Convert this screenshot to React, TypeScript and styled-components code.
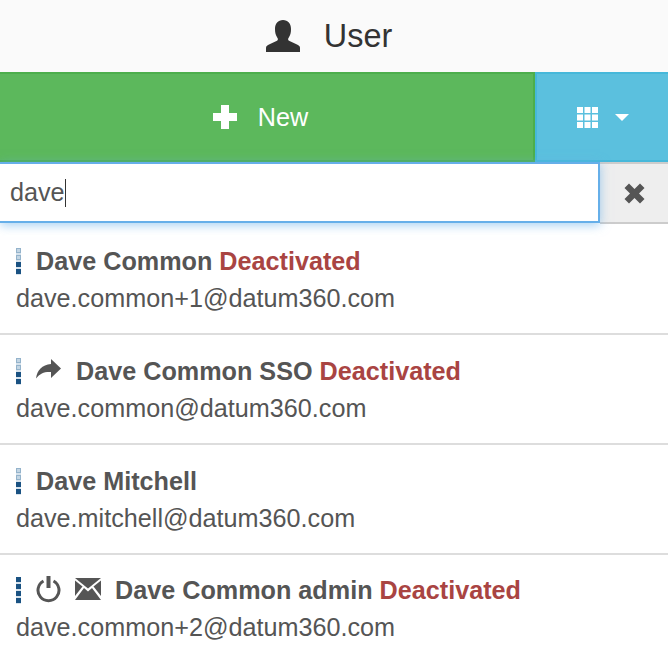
import styled, { createGlobalStyle } from "styled-components";

const Global = createGlobalStyle`
  html, body {
    margin: 0;
    background: #fff;
    font-family: "Liberation Sans", Arial, sans-serif;
    color: #555;
  }
`;

const users = [
  { name: "Dave Common", email: "dave.common+1@datum360.com", level: 2, off: true, icons: [] as string[] },
  { name: "Dave Common SSO", email: "dave.common@datum360.com", level: 2, off: true, icons: ["share"] },
  { name: "Dave Mitchell", email: "dave.mitchell@datum360.com", level: 2, off: false, icons: [] as string[] },
  { name: "Dave Common admin", email: "dave.common+2@datum360.com", level: 4, off: true, icons: ["power", "mail"] },
];

const UserIcon = () => (
  <svg width="34" height="32" viewBox="0 0 34 32">
    <path d="M0 32v-4c0-1.500 1-2.500 3-3.400l8-3.800c1-.6 1.200-1.600.5-2.800C9.500 15 9 12.500 9 9c0-5.500 3-9 8-9s8 3.500 8 9c0 3.500-.5 6-2.500 9-.7 1.200-.5 2.200.5 2.800l8 3.800c2 .9 3 1.900 3 3.400v4z" fill="#333" />
  </svg>
);

const PlusIcon = () => (
  <svg width="24" height="24" viewBox="0 0 24 24">
    <path d="M8 0h8v8h8v8h-8v8H8v-8H0V8h8z" fill="#fff" />
  </svg>
);

const GridIcon = () => (
  <svg width="21" height="21" viewBox="0 0 21 21" fill="#fff">
    {[0, 7.500, 15].map((y) =>
      [0, 7.500, 15].map((x) => <rect key={`${x}-${y}`} x={x} y={y} width="6" height="6" />)
    )}
  </svg>
);

const CloseIcon = () => (
  <svg width="21" height="21" viewBox="0 0 21 21">
    <path d="M5 .5l5.500 5.500L16 .5 20.500 5 15 10.500l5.500 5.500-4.500 4.500-5.500-5.500L5 20.500.5 16 6 10.500.5 5z" fill="#555" />
  </svg>
);

const ShareIcon = () => (
  <svg width="26" height="24" viewBox="0 0 26 24">
    <path d="M15 0L25 9.500 15 19v-6C9 12.500 4 14 0 19.500 1 11 6 6 15 5z" fill="#555" />
  </svg>
);

const PowerIcon = () => (
  <svg width="25" height="28" viewBox="0 0 25 28" fill="none" stroke="#555">
    <path d="M7.500 5a10.500 10.500 0 1 0 10 0" strokeWidth="3" />
    <path d="M12.500 0v12" strokeWidth="4" />
  </svg>
);

const MailIcon = () => (
  <svg width="26" height="24" viewBox="0 0 26 24" fill="#555">
    <path d="M0 0h26L13 10.500z" />
    <path d="M0 2.500v15.500l7.500-9.500z" />
    <path d="M26 2.500v15.500l-7.500-9.500z" />
    <path d="M9 10l4 3.500 4-3.500 9 12H0z" />
  </svg>
);

const Page = styled.div`
  width: 668px;
  height: 654px;
  overflow: hidden;
`;

const Header = styled.header`
  height: 72px;
  background: #fafafa;
  display: flex;
  align-items: center;
  justify-content: center;
  gap: 24px;
  padding-right: 10px;
  box-sizing: border-box;
  font-size: 32.400px;
  color: #333;
`;

const Toolbar = styled.div`
  display: flex;
  height: 90px;
`;

const NewButton = styled.button`
  flex: 1;
  border: 2px solid #4cae4c;
  border-left: 0;
  background: #5cb85c;
  color: #fff;
  font: inherit;
  font-size: 25.200px;
  display: flex;
  align-items: center;
  justify-content: center;
  gap: 21px;
  padding: 0 12px 0 0;
`;

const ViewButton = styled.button`
  width: 133px;
  border: 2px solid #46b8da;
  border-right: 0;
  background: #5bc0de;
  display: flex;
  align-items: center;
  justify-content: center;
  gap: 17px;
  padding: 0;
`;

const Caret = styled.span`
  border-top: 7px solid #fff;
  border-left: 7px solid transparent;
  border-right: 7px solid transparent;
`;

const SearchRow = styled.div`
  display: flex;
  height: 63px;
`;

const SearchBox = styled.div`
  flex: 1;
  height: 61px;
  box-sizing: border-box;
  border: 2px solid #66afe9;
  border-left: 0;
  box-shadow: 0 2px 10px rgba(102, 175, 233, 0.6);
  background: #fff;
  display: flex;
  align-items: center;
  padding-left: 10px;
  font-size: 25.200px;
  color: #555;
  position: relative;
  z-index: 1;
`;

const Cursor = styled.span`
  display: inline-block;
  width: 1px;
  height: 28px;
  background: #333;
`;

const ClearButton = styled.button`
  width: 68px;
  height: 62px;
  border: 2px solid #ccc;
  border-left: 0;
  border-right: 0;
  background: #eee;
  display: flex;
  align-items: center;
  justify-content: center;
  padding: 0;
`;

const List = styled.ul`
  list-style: none;
  margin: 0;
  padding: 0;
`;

const Item = styled.li`
  height: 110px;
  box-sizing: border-box;
  padding: 18px 16px 0;
  border-bottom: 2px solid #ddd;
  &:last-child {
    border-bottom: 0;
    padding-top: 17px;
  }
`;

const NameRow = styled.div`
  display: flex;
  align-items: center;
  height: 36px;
  font-size: 25.200px;
  font-weight: 700;
  white-space: pre;
`;

const Bar = styled.span`
  display: flex;
  flex-direction: column;
  justify-content: space-between;
  height: 27px;
  width: 5px;
  margin-right: 15px;
  background: #d6e2ec;
`;

const Seg = styled.span<{ $on: boolean }>`
  height: 5.500px;
  background: ${(p) => (p.$on ? "#1a5282" : "#c3d5e3")};
  box-shadow: ${(p) => (p.$on ? "none" : "inset 0 0 0 1px #94b3cb")};
`;

const IconSlot = styled.span`
  display: flex;
  margin-right: 14px;
`;

const Deactivated = styled.span`
  color: #a94442;
  font-weight: 700;
`;

const Email = styled.div`
  font-size: 25.200px;
  line-height: 36px;
  margin-top: 1px;
`;

const icons: Record<string, React.ReactNode> = {
  share: <ShareIcon />,
  power: <PowerIcon />,
  mail: <MailIcon />,
};

export default function App() {
  return (
    <Page>
      <Global />
      <Header>
        <UserIcon />
        User
      </Header>
      <Toolbar>
        <NewButton>
          <PlusIcon />
          New
        </NewButton>
        <ViewButton>
          <GridIcon />
          <Caret />
        </ViewButton>
      </Toolbar>
      <SearchRow>
        <SearchBox>
          dave
          <Cursor />
        </SearchBox>
        <ClearButton>
          <CloseIcon />
        </ClearButton>
      </SearchRow>
      <List>
        {users.map((u) => (
          <Item key={u.email}>
            <NameRow>
              <Bar>
                {[4, 3, 2, 1].map((n) => (
                  <Seg key={n} $on={n <= u.level} />
                ))}
              </Bar>
              {u.icons.map((i) => (
                <IconSlot key={i}>{icons[i]}</IconSlot>
              ))}
              {u.name}
              {u.off ? " " : ""}
              {u.off && <Deactivated>Deactivated</Deactivated>}
            </NameRow>
            <Email>{u.email}</Email>
          </Item>
        ))}
      </List>
    </Page>
  );
}
